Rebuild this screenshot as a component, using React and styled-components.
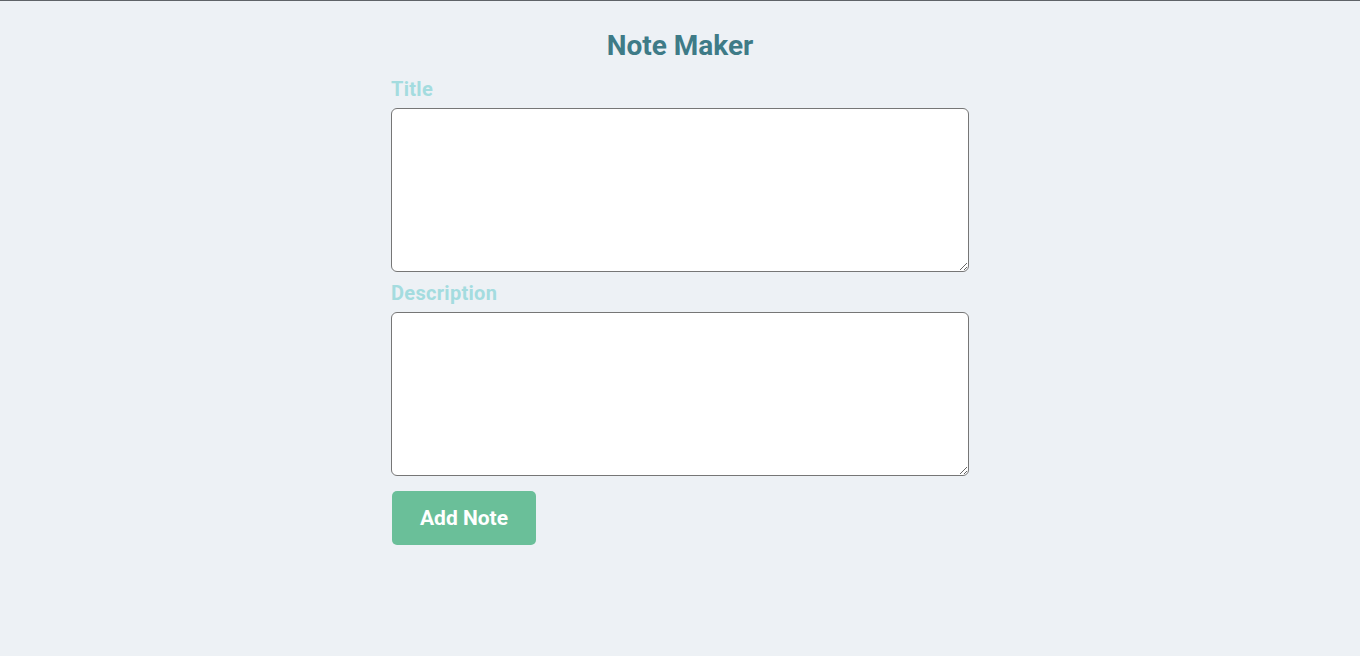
import styled, { createGlobalStyle } from "styled-components";

const GlobalStyle = createGlobalStyle`
	body {
		margin: 0;
		background: #edf1f5;
		font-family: Roboto, "Liberation Sans", sans-serif;
	}
`;

const Page = styled.div`
	min-height: 655px;
	border-top: 1px solid #5f6368;
	display: flex;
	justify-content: center;
`;

const Form = styled.div`
	width: 578px;
	display: flex;
	flex-direction: column;
	padding-top: 29px;
`;

const Heading = styled.h1`
	margin: 0 0 16px;
	text-align: center;
	font-size: 28px;
	line-height: 32px;
	font-weight: 700;
	letter-spacing: 0;
	color: #3e7b87;
`;

const Label = styled.label`
	font-size: 20px;
	line-height: 22px;
	font-weight: 700;
	letter-spacing: 0.3px;
	color: #a4dcdf;
	margin-bottom: 8px;
`;

const Area = styled.textarea`
	box-sizing: border-box;
	width: 578px;
	height: 164px;
	border: 1px solid #767676;
	border-radius: 6px;
	background: #fff;
	margin: 0 0 10px;
	padding: 4px;
`;

const Button = styled.button`
	align-self: flex-start;
	margin: 5px 0 0 1px;
	width: 144px;
	height: 54px;
	border: none;
	border-radius: 5px;
	background: #6abf99;
	color: #fff;
	font-family: Roboto, "Liberation Sans", sans-serif;
	font-size: 21px;
	font-weight: 700;
	letter-spacing: 0;
	cursor: pointer;
`;

function App() {
	return (
		<>
			<GlobalStyle />
			<Page>
				<Form>
					<Heading>Note Maker</Heading>
					<Label>Title</Label>
					<Area />
					<Label>Description</Label>
					<Area />
					<Button>Add Note</Button>
				</Form>
			</Page>
		</>
	);
}

export default App;
